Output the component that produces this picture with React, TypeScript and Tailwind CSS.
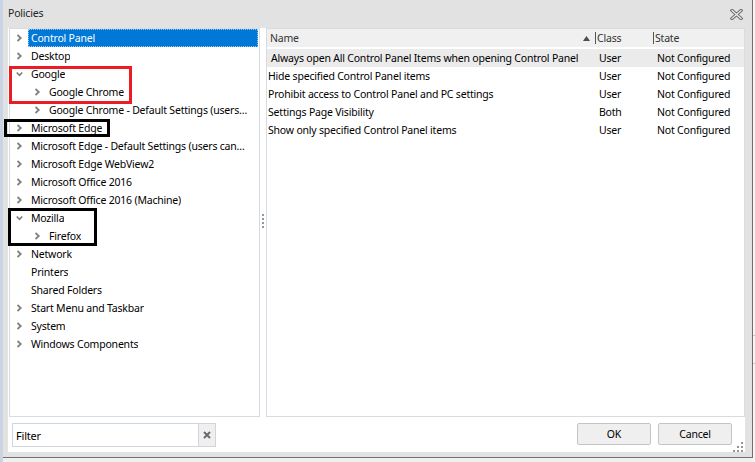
import React from 'react'

type TreeItem = {
  label: string
  level: number
  chevron?: 'right' | 'down'
  selected?: boolean
}

const treeItems: TreeItem[] = [
  { label: 'Control Panel', level: 0, chevron: 'right', selected: true },
  { label: 'Desktop', level: 0, chevron: 'right' },
  { label: 'Google', level: 0, chevron: 'down' },
  { label: 'Google Chrome', level: 1, chevron: 'right' },
  { label: 'Google Chrome - Default Settings (users…', level: 1, chevron: 'right' },
  { label: 'Microsoft Edge', level: 0, chevron: 'right' },
  { label: 'Microsoft Edge - Default Settings (users can…', level: 0, chevron: 'right' },
  { label: 'Microsoft Edge WebView2', level: 0, chevron: 'right' },
  { label: 'Microsoft Office 2016', level: 0, chevron: 'right' },
  { label: 'Microsoft Office 2016 (Machine)', level: 0, chevron: 'right' },
  { label: 'Mozilla', level: 0, chevron: 'down' },
  { label: 'Firefox', level: 1, chevron: 'right' },
  { label: 'Network', level: 0, chevron: 'right' },
  { label: 'Printers', level: 0 },
  { label: 'Shared Folders', level: 0 },
  { label: 'Start Menu and Taskbar', level: 0, chevron: 'right' },
  { label: 'System', level: 0, chevron: 'right' },
  { label: 'Windows Components', level: 0, chevron: 'right' },
]

const policies = [
  { name: 'Always open All Control Panel Items when opening Control Panel', cls: 'User' },
  { name: 'Hide specified Control Panel items', cls: 'User' },
  { name: 'Prohibit access to Control Panel and PC settings', cls: 'User' },
  { name: 'Settings Page Visibility', cls: 'Both' },
  { name: 'Show only specified Control Panel items', cls: 'User' },
]

function Chevron({ dir }: { dir: 'right' | 'down' }) {
  return (
    <svg width="7" height="8" viewBox="0 0 7 8" className="shrink-0">
      {dir === 'right' ? (
        <polyline points="1.5,1 4.8,4 1.5,7" fill="none" stroke="#7e7e7e" strokeWidth="1.7" />
      ) : (
        <polyline points="0.8,2.5 3.5,5.3 6.2,2.5" fill="none" stroke="#7e7e7e" strokeWidth="1.7" />
      )}
    </svg>
  )
}

function TreeRow({ item }: { item: TreeItem }) {
  return (
    <div
      className="flex h-[18px] items-center"
      style={{ paddingLeft: 5 + item.level * 18 }}
    >
      <div className="flex w-[13px] items-center pl-[1px]">
        {item.chevron && <Chevron dir={item.chevron} />}
      </div>
      <span
        className={
          item.selected
            ? 'flex h-[18px] flex-1 items-center truncate border border-dotted border-[#9fc4ec] bg-[#0078d7] pl-[2px] text-white'
            : 'truncate pl-[3px] text-black'
        }
      >
        {item.label}
      </span>
    </div>
  )
}

function SortArrow() {
  return (
    <svg width="7" height="5" viewBox="0 0 7 5">
      <polygon points="0,5 3.5,0 7,5" fill="#4d4d4d" />
    </svg>
  )
}

export default function App() {
  return (
    <div className="relative flex h-[462px] w-[755px] items-start overflow-hidden bg-[#f0f0f0] font-['Noto_Sans',sans-serif] text-[10.5px] leading-[15px] tracking-[-0.2px]">
      <div className="h-[462px] w-[3px] bg-[#c9d3e3]" />

      {/* dialog */}
      <div className="flex h-[458px] w-[750px] flex-col border-b border-r border-[#6f6f6f] bg-[#e2e2e2]">
        {/* title */}
        <div className="flex h-[28px] items-center justify-between pl-[5px] pr-[9px]">
          <span className="pb-[1px] text-[#222]">Policies</span>
          <svg width="13" height="11" viewBox="0 0 13 11">
            <path d="M2 1.5 L11 9.5 M11 1.5 L2 9.5" stroke="#6a6a6a" strokeWidth="3.2" strokeLinecap="square" />
            <path d="M2 1.5 L11 9.5 M11 1.5 L2 9.5" stroke="#f4f4f4" strokeWidth="1.2" strokeLinecap="square" />
          </svg>
        </div>

        {/* card */}
        <div className="ml-[5px] flex h-[424px] w-[737px] flex-col bg-white">
          <div className="flex h-[389px]">
            {/* tree */}
            <div className="ml-[1px] w-[251px] border border-[#d7dce2] pr-[1px]">
              {treeItems.map((item) => (
                <TreeRow key={item.label} item={item} />
              ))}
            </div>

            {/* splitter */}
            <div className="flex w-[6px] flex-col items-center justify-center gap-[2px] pb-[4px]">
              <div className="h-[2px] w-[2px] bg-[#8f98a3]" />
              <div className="h-[2px] w-[2px] bg-[#8f98a3]" />
              <div className="h-[2px] w-[2px] bg-[#8f98a3]" />
              <div className="h-[2px] w-[2px] bg-[#8f98a3]" />
            </div>

            {/* list */}
            <div className="w-[479px] border border-[#d7dce2]">
              <div className="flex h-[18px] items-center bg-[#f0f0f0] text-[#333]">
                <div className="flex w-[328px] items-center justify-between pl-[3px] pr-[5px]">
                  <span>Name</span>
                  <SortArrow />
                </div>
                <div className="flex w-[58px] items-center">
                  <span className="mr-[1px] h-[12px] w-px bg-[#555]" />
                  <span>Class</span>
                </div>
                <div className="flex items-center">
                  <span className="mr-[1px] h-[12px] w-px bg-[#555]" />
                  <span>State</span>
                </div>
              </div>
              <div className="mt-[2px] flex flex-col">
                {policies.map((p, i) => (
                  <div
                    key={p.name}
                    className={
                      i === 0
                        ? 'flex h-[18px] items-center bg-[#ebebeb] text-black'
                        : 'flex h-[18px] items-center text-black'
                    }
                  >
                    <div className={i === 0 ? 'w-[328px] truncate pl-[4px]' : 'w-[328px] truncate pl-[1px]'}>
                      {p.name}
                    </div>
                    <div className="w-[58px] pl-[4px]">{p.cls}</div>
                    <div className="pl-[4px]">Not Configured</div>
                  </div>
                ))}
              </div>
            </div>
          </div>

          {/* bottom bar */}
          <div className="flex h-[35px] items-start pt-[6px]">
            <div className="ml-[4px] flex h-[24px]">
              <div className="flex w-[187px] items-center border border-[#cfd6de] bg-white pl-[3px] text-[11px] text-black">
                Filter
              </div>
              <div className="flex w-[17px] items-center justify-center border border-l-0 border-[#d4d4d4] bg-[#efefef]">
                <svg width="8" height="8" viewBox="0 0 8 8">
                  <path d="M1 1 L7 7 M7 1 L1 7" stroke="#6a6a6a" strokeWidth="2" />
                </svg>
              </div>
            </div>
            <div className="ml-auto mr-[13px] flex gap-[7px]">
              <button className="flex h-[22px] w-[74px] items-center justify-center rounded-[2px] border border-[#c4c4c4] bg-[#efefef] text-black">
                OK
              </button>
              <button className="flex h-[22px] w-[74px] items-center justify-center rounded-[2px] border border-[#c4c4c4] bg-[#efefef] text-black">
                Cancel
              </button>
            </div>
          </div>
        </div>
      </div>

      {/* window behind */}
      <div className="flex h-[462px] flex-1 flex-col bg-[#f7f7f7]">
        <div className="mt-[335px] h-px bg-[#c8c8c8]" />
        <div className="mt-[27px] h-px bg-[#c8c8c8]" />
      </div>

      {/* resize grip */}
      <svg className="absolute left-[733px] top-[442px]" width="12" height="12" viewBox="0 0 12 12">
        <rect x="8" y="0" width="2" height="2" fill="#8e96a0" />
        <rect x="4" y="4" width="2" height="2" fill="#8e96a0" />
        <rect x="8" y="4" width="2" height="2" fill="#8e96a0" />
        <rect x="0" y="8" width="2" height="2" fill="#8e96a0" />
        <rect x="4" y="8" width="2" height="2" fill="#8e96a0" />
        <rect x="8" y="8" width="2" height="2" fill="#8e96a0" />
      </svg>

      {/* annotation boxes */}
      <div className="absolute left-[9px] top-[66px] h-[38px] w-[123px] border-[3px] border-[#ed1c24]" />
      <div className="absolute left-[4px] top-[119px] h-[18px] w-[106px] border-[3px] border-black" />
      <div className="absolute left-[8px] top-[208px] h-[38px] w-[89px] border-[3px] border-black" />
    </div>
  )
}
